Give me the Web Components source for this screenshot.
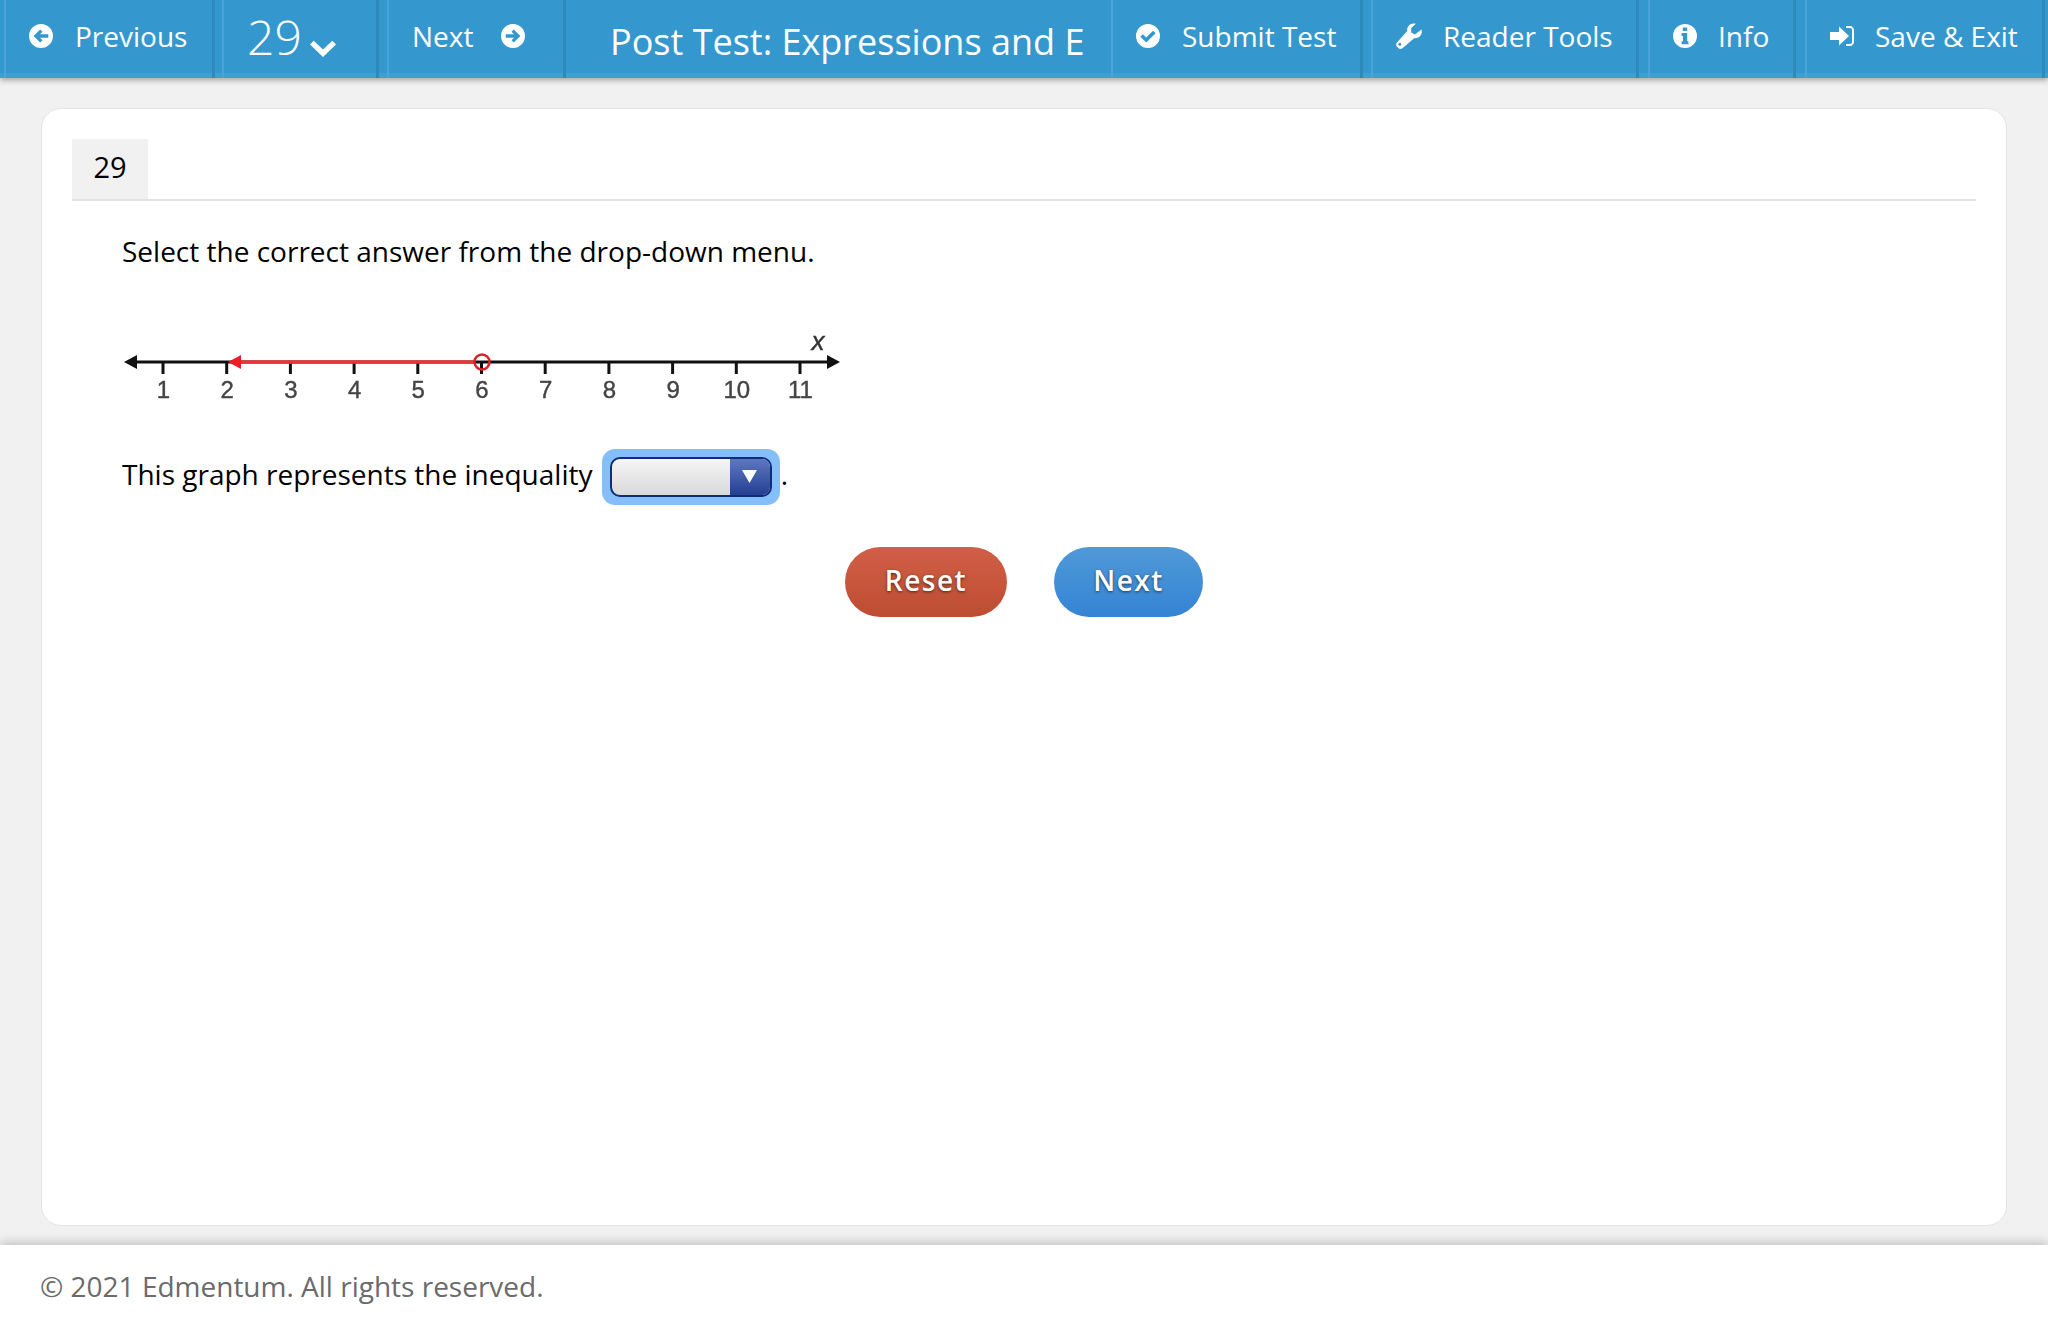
<!DOCTYPE html>
<html>
<head>
<meta charset="utf-8">
<title>Post Test</title>
<style>
    html, body { margin: 0; height: 1327px; overflow: hidden; }
    body {
        display: flex;
        flex-direction: column;
        background: #f1f1f1;
        font-family: "Open Sans", sans-serif;
    }
</style>
</head>
<body>
<test-nav>
    <nav-item style="--w:211px;--mr:7px" icon="left">Previous</nav-item>
    <nav-item style="--w:157px;--mr:8px" big>29</nav-item>
    <nav-item style="--w:179px" icon="right" after>Next</nav-item>
    <nav-title>Post Test: Expressions and E</nav-title>
    <nav-item style="--w:252px;--mr:8px" icon="check">Submit Test</nav-item>
    <nav-item style="--w:268px;--mr:9px;--gap:21px" icon="wrench">Reader Tools</nav-item>
    <nav-item style="--w:148px;--mr:9px;--gap:21px" icon="info">Info</nav-item>
    <nav-item style="--w:240px;--gap:21px" icon="exit">Save &amp; Exit</nav-item>
</test-nav>
<question-card number="29">
    <p-line>Select the correct answer from the drop-down menu.</p-line>
    <number-line></number-line>
    <p-line inline>This graph represents the inequality <inline-drop></inline-drop><span>.</span></p-line>
    <button-row>
        <pill-button color="red" style="--w:162px">Reset</pill-button>
        <pill-button color="blue" style="--w:149px">Next</pill-button>
    </button-row>
</question-card>
<page-footer>© 2021 Edmentum. All rights reserved.</page-footer>

<script>
(function() {
    const ICONS = {
        left: '<svg viewBox="0 0 24 24" width="24" height="24"><path fill="#fff" fill-rule="evenodd" d="M12 0a12 12 0 1 0 0 24a12 12 0 1 0 0-24zM4.6 12l6.6-6.6 2.3 2.3-2.6 2.6h8.4v3.4h-8.4l2.6 2.6-2.3 2.3z"/></svg>',
        right: '<svg viewBox="0 0 24 24" width="24" height="24"><path fill="#fff" fill-rule="evenodd" d="M12 0a12 12 0 1 0 0 24a12 12 0 1 0 0-24zM19.4 12l-6.6 6.6-2.3-2.3 2.6-2.6H4.7v-3.4h8.4l-2.6-2.6 2.3-2.3z"/></svg>',
        check: '<svg viewBox="0 0 24 24" width="24" height="24"><path fill="#fff" fill-rule="evenodd" d="M12 0a12 12 0 1 0 0 24a12 12 0 1 0 0-24zM10.2 18.6L4.4 12.8l2.5-2.5 3.3 3.3 6.9-6.9 2.5 2.5z"/></svg>',
        wrench: '<svg viewBox="0 0 26 26" width="26" height="26"><path fill="#fff" fill-rule="evenodd" d="M25.4 6.6c.3.9.4 1.6.4 2.2 0 1.9-.8 3.5-2.2 4.8-1.5 1.300-3.300 1.800-5.200 1.500L6.500 25.300c-.6.500-1.300.7-2.100.7-.8 0-1.500-.3-2.100-.9L1 23.800c-.6-.6-.9-1.300-.9-2.100 0-.8.3-1.500.9-2.100L11.200 8.100c-.3-2 .2-3.800 1.500-5.300C14.100 1.200 15.800.4 17.700.4c.7 0 1.400.1 2.100.4l-4.600 4.300v4.500l3.800 2z M5.300 21.300a1.500 1.500 0 1 0-3 0a1.500 1.500 0 1 0 3 0z"/></svg>',
        info: '<svg viewBox="0 0 24 24" width="24" height="24"><path fill="#fff" fill-rule="evenodd" d="M12 0a12 12 0 1 0 0 24a12 12 0 1 0 0-24zM9.800 3.400h4.400v3.500H9.800zM8.600 9.100h5.600v8.200h1.200v3H8.600v-3h1.300v-5.200H8.600z"/></svg>',
        exit: '<svg viewBox="0 0 24 24" width="24" height="24"><path fill="#fff" d="M0 8h9V2.500L19 12 9 21.500V16H0z"/><path fill="#fff" d="M16 2h4c2.200 0 4 1.800 4 4v12c0 2.200-1.800 4-4 4h-4v-2h4c1.100 0 2-.9 2-2V6c0-1.100-.9-2-2-2h-4z"/></svg>'
    };

    class TestNav extends HTMLElement {
        constructor() {
            super();
            this.attachShadow({mode: "open"}).innerHTML = `
                <style>
                    :host {
                        display: flex;
                        flex: none;
                        padding: 0 3px 0 4px;
                        background: #3498cf;
                        box-shadow: inset 0 -5px 0 #3ba0d3, 0 2px 6px rgba(0,0,0,.35);
                        position: relative;
                        z-index: 2;
                        box-sizing: border-box;
                        height: 78px;
                    }
                </style>
                <slot></slot>
            `;
        }
    }

    class NavItem extends HTMLElement {
        constructor() {
            super();
            let icon = ICONS[this.getAttribute("icon")] || "";
            let chevron = '<svg class="chev" viewBox="0 0 26 17" width="26" height="17"><path fill="#fff" d="M0 4.500L3.700.8 13 9.600 22.300.8 26 4.500 13 17z"/></svg>';
            let before = this.hasAttribute("after") ? "" : icon;
            let after = this.hasAttribute("after") ? icon : "";
            let big = this.hasAttribute("big");
            this.attachShadow({mode: "open"}).innerHTML = `
                <style>
                    :host {
                        display: flex;
                        flex: none;
                        align-items: center;
                        box-sizing: border-box;
                        width: var(--w);
                        margin-right: var(--mr, 0);
                        padding: 0 0 6px 23px;
                        gap: ${this.hasAttribute("after") ? "28px" : "var(--gap, 22px)"};
                        border-left: 2px solid #4aa6da;
                        border-right: 3px solid #2d8abd;
                        color: #fff;
                        font-size: 28px;
                        line-height: 1;
                    }
                    :host([big]) { gap: 8px; font-size: 48px; font-weight: 300; padding-bottom: 5px; }
                    .chev { margin-top: 24px; }
                    svg { flex: none; display: block; }
                    span { display: block; }
                </style>
                ${before}<span><slot></slot></span>${after}${big ? chevron : ""}
            `;
        }
    }

    class NavTitle extends HTMLElement {
        constructor() {
            super();
            this.attachShadow({mode: "open"}).innerHTML = `
                <style>
                    :host {
                        display: block;
                        flex: 1;
                        min-width: 0;
                        white-space: nowrap;
                        box-sizing: border-box;
                        padding: 18px 0 0 44px;
                        color: #fff;
                        font-size: 36px;
                        line-height: 48px;
                    }
                </style>
                <slot></slot>
            `;
        }
    }

    class QuestionCard extends HTMLElement {
        constructor() {
            super();
            this.attachShadow({mode: "open"}).innerHTML = `
                <style>
                    :host {
                        display: block;
                        flex: none;
                        box-sizing: border-box;
                        height: 1118px;
                        margin: 30px 41px 0;
                        padding: 30px 30px 0;
                        background: #fff;
                        border: 1px solid #e4e4e4;
                        border-radius: 20px;
                    }
                    .head {
                        border-bottom: 2px solid #e2e2e2;
                        height: 60px;
                    }
                    .tab {
                        width: 76px;
                        height: 60px;
                        background: #f1f1f1;
                        font-size: 29px;
                        line-height: 55px;
                        text-align: center;
                        color: #000;
                    }
                    .body { padding: 31px 0 0 50px; }
                </style>
                <div class="head"><div class="tab">${this.getAttribute("number")}</div></div>
                <div class="body"><slot></slot></div>
            `;
        }
    }

    class PLine extends HTMLElement {
        constructor() {
            super();
            this.attachShadow({mode: "open"}).innerHTML = `
                <style>
                    :host {
                        display: block;
                        color: #000;
                        font-size: 28px;
                        line-height: 38px;
                    }
                    :host([inline]) {
                        margin-top: 44px;
                        line-height: 56px;
                    }
                </style>
                <slot></slot>
            `;
        }
    }

    class NumberLine extends HTMLElement {
        constructor() {
            super();
            let ticks = "";
            for (let i = 1; i <= 11; i++) {
                let x = 41 + (i - 1) * 63.7;
                ticks += `<line x1="${x}" y1="40" x2="${x}" y2="52" stroke="#111" stroke-width="3"/>`;
                ticks += `<text x="${x + 0.5}" y="76" text-anchor="middle" font-family="Liberation Sans, sans-serif" font-size="24" fill="#444" stroke="#444" stroke-width=".4">${i}</text>`;
            }
            this.attachShadow({mode: "open"}).innerHTML = `
                <style>
                    :host { display: block; margin-top: 52px; height: 80px; }
                    svg { display: block; filter: blur(.6px); }
                </style>
                <svg width="730" height="80" viewBox="0 0 730 80">
                    <line x1="8" y1="40" x2="712" y2="40" stroke="#111" stroke-width="3"/>
                    <path d="M2 40l13-7v14z M718 40l-13-7v14z" fill="#111"/>
                    ${ticks}
                    <line x1="115" y1="40" x2="352" y2="40" stroke="#e8343a" stroke-width="3.500"/>
                    <path d="M106 40l13-7v14z" fill="#ee1c25"/>
                    <circle cx="360" cy="40" r="7.500" fill="none" stroke="#d8232a" stroke-width="2.500"/>
                    <text x="696" y="28" text-anchor="middle" font-family="Liberation Sans, sans-serif" font-style="italic" font-size="26" fill="#333" stroke="#333" stroke-width=".4">x</text>
                </svg>
            `;
        }
    }

    class InlineDrop extends HTMLElement {
        constructor() {
            super();
            this.attachShadow({mode: "open"}).innerHTML = `
                <style>
                    :host {
                        display: inline-block;
                        vertical-align: middle;
                        margin: -2px 1px 0 2px;
                        box-sizing: border-box;
                        width: 178px;
                        height: 56px;
                        padding: 8px;
                        background: #85bffa;
                        border-radius: 13px;
                    }
                    .box {
                        display: flex;
                        height: 100%;
                        box-sizing: border-box;
                        border: 2px solid #0f2b7c;
                        border-radius: 10px;
                        overflow: hidden;
                        background: linear-gradient(#f5f5f5, #d9d9d9);
                    }
                    .arrow {
                        margin-left: auto;
                        width: 40px;
                        display: flex;
                        align-items: center;
                        justify-content: center;
                        background: linear-gradient(#5d78bf, #253f93);
                    }
                </style>
                <div class="box"><div class="arrow">
                    <svg width="15" height="13" viewBox="0 0 15 13"><path d="M0 0h15L7.500 13z" fill="#fff"/></svg>
                </div></div>
            `;
        }
    }

    class ButtonRow extends HTMLElement {
        constructor() {
            super();
            this.attachShadow({mode: "open"}).innerHTML = `
                <style>
                    :host {
                        display: flex;
                        gap: 47px;
                        margin-top: 42px;
                        padding-left: 723px;
                    }
                </style>
                <slot></slot>
            `;
        }
    }

    class PillButton extends HTMLElement {
        constructor() {
            super();
            this.attachShadow({mode: "open"}).innerHTML = `
                <style>
                    :host {
                        display: block;
                        box-sizing: border-box;
                        width: var(--w);
                        height: 70px;
                        border-radius: 35px;
                        color: #fff;
                        font-size: 28px;
                        font-weight: 600;
                        letter-spacing: 1.5px;
                        line-height: 67px;
                        text-align: center;
                        text-shadow: 0 1px 3px rgba(0,0,0,.6);
                    }
                    :host([color="red"]) { background: linear-gradient(#d05f47, #bd4d31); }
                    :host([color="blue"]) { background: linear-gradient(#5099d8, #3484d4); }
                </style>
                <slot></slot>
            `;
        }
    }

    class PageFooter extends HTMLElement {
        constructor() {
            super();
            this.attachShadow({mode: "open"}).innerHTML = `
                <style>
                    :host {
                        display: block;
                        flex: 1;
                        margin-top: 19px;
                        padding: 21px 0 0 40px;
                        background: #fff;
                        color: #6b6b6b;
                        font-size: 28px;
                        line-height: 40px;
                        box-shadow: 0 -2px 10px rgba(0,0,0,.22);
                    }
                </style>
                <slot></slot>
            `;
        }
    }

    customElements.define("test-nav", TestNav);
    customElements.define("nav-item", NavItem);
    customElements.define("nav-title", NavTitle);
    customElements.define("question-card", QuestionCard);
    customElements.define("p-line", PLine);
    customElements.define("number-line", NumberLine);
    customElements.define("inline-drop", InlineDrop);
    customElements.define("button-row", ButtonRow);
    customElements.define("pill-button", PillButton);
    customElements.define("page-footer", PageFooter);
})();
</script>
</body>
</html>
